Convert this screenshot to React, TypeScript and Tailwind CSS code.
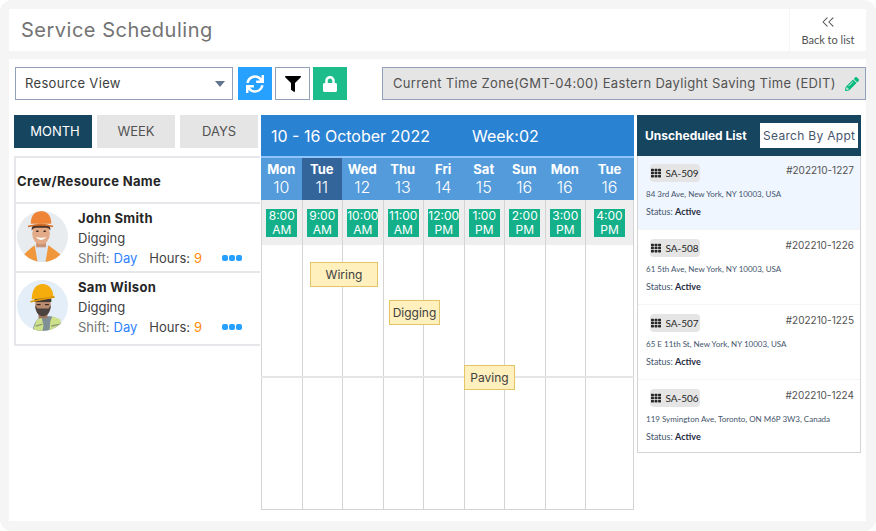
import { ChevronsLeft } from "lucide-react";
import { FaSync, FaFilter, FaLock, FaPencilAlt, FaTh } from "react-icons/fa";

const days = [
  { name: "Mon", date: 10, time: "8:00", part: "AM" },
  { name: "Tue", date: 11, time: "9:00", part: "AM", active: true },
  { name: "Wed", date: 12, time: "10:00", part: "AM" },
  { name: "Thu", date: 13, time: "11:00", part: "AM" },
  { name: "Fri", date: 14, time: "12:00", part: "PM" },
  { name: "Sat", date: 15, time: "1:00", part: "PM" },
  { name: "Sun", date: 16, time: "2:00", part: "PM" },
  { name: "Mon", date: 16, time: "3:00", part: "PM" },
  { name: "Tue", date: 16, time: "4:00", part: "PM" },
];

const tickets = [
  { id: "SA-509", ref: "#202210-1227", address: "84 3rd Ave, New York, NY 10003, USA", highlight: true },
  { id: "SA-508", ref: "#202210-1226", address: "61 5th Ave, New York, NY 10003, USA" },
  { id: "SA-507", ref: "#202210-1225", address: "65 E 11th St, New York, NY 10003, USA" },
  { id: "SA-506", ref: "#202210-1224", address: "119 Symington Ave, Toronto, ON M6P 3W3, Canada" },
];

const dayCols = "grid-cols-[repeat(8,minmax(0,1fr))_49px]";

function JohnAvatar() {
  return (
    <svg viewBox="0 0 52 52" className="mt-[3px] ml-px size-[51px] shrink-0">
      <defs>
        <clipPath id="john-clip">
          <circle cx="26" cy="26" r="26" />
        </clipPath>
      </defs>
      <circle cx="26" cy="26" r="26" fill="#e8ecef" />
      <g clipPath="url(#john-clip)">
        <path d="M14 52 L17 35 H33 L37 52 Z" fill="#dbe5f0" />
        <path d="M4 48 C9 42 14 38 18 35 L21 52 H4 Z" fill="#f0973c" />
        <path d="M47 47 C42 42 36 38 32 35 L29 52 H47 Z" fill="#f0973c" />
        <rect x="19.500" y="28" width="10" height="9" fill="#c99272" />
        <ellipse cx="24.500" cy="23" rx="9" ry="11" fill="#e2aa86" />
        <path d="M15 20 Q14.500 15 18 14 H31 Q34.500 15 34 20 Q32.500 17 30 17 H19 Q16.500 17 15 20 Z" fill="#4a3427" />
        <rect x="19.500" y="20" width="2.500" height="1.500" rx="0.700" fill="#3a2a22" />
        <rect x="27" y="20" width="2.500" height="1.500" rx="0.700" fill="#3a2a22" />
        <path d="M19 26.500 Q24.500 32.500 30 26.500 Q24.500 28 19 26.500 Z" fill="#ffffff" />
        <path d="M14 13 C14 4 19 0 24.500 0 C30 0 35 4 35 13 Z" fill="#ef8436" />
        <path d="M11 15 Q24 11.500 37 15 L36.500 16.500 Q24 13.500 11.500 16.500 Z" fill="#d66c24" />
      </g>
    </svg>
  );
}

function SamAvatar() {
  return (
    <svg viewBox="0 0 52 52" className="mt-[3px] ml-px size-[51px] shrink-0">
      <defs>
        <clipPath id="sam-clip">
          <circle cx="26" cy="26" r="26" />
        </clipPath>
      </defs>
      <circle cx="26" cy="26" r="26" fill="#e3eef8" />
      <g clipPath="url(#sam-clip)">
        <path d="M16 52 C17 43 21 39 26 37 H34 C40 38 46 41 48 52 Z" fill="#7f8f96" />
        <path d="M16 52 L20 41 L25 38 L27 46 L26 52 Z" fill="#cfe08a" />
        <path d="M33 52 L34 42 L36 37 L44 40 L46 52 Z" fill="#cfe08a" />
        <path d="M19 47 L26 45 M35 47 L45 45" stroke="#8c9a78" strokeWidth="1.500" />
        <rect x="22" y="30" width="9" height="9" fill="#9e7760" />
        <ellipse cx="26.500" cy="26" rx="8" ry="10.500" fill="#b98b70" />
        <path d="M18.500 26 C19 33 22 37 26.500 37 C31 37 34 33 34.500 26 L32 29 H21 Z" fill="#4a4340" />
        <rect x="18" y="19" width="17" height="3.500" fill="#3f3a38" />
        <rect x="20" y="24.500" width="4" height="1.200" fill="#3a2a22" />
        <rect x="28.500" y="24.500" width="4" height="1.200" fill="#3a2a22" />
        <path d="M15 20 C15 9 20 4 26 4 C33 4 37 10 37 17 Z" fill="#f5ad0d" />
        <path d="M13.500 21.500 L38 16 L38.500 18 L14 23 Z" fill="#dd9606" />
      </g>
    </svg>
  );
}

function CrewRow({ name, avatar, tall }: { name: string; avatar: React.ReactNode; tall?: boolean }) {
  return (
    <div className={`flex gap-2.5 border-t-2 border-gray-200 pt-1 ${tall ? "h-[73px]" : "h-[69px]"}`}>
      {avatar}
      <div className="text-[13px] leading-5 text-neutral-700">
        <div className="font-bold tracking-wide text-neutral-800">{name}</div>
        <div>Digging</div>
        <div className="flex items-center text-neutral-700">
          <span className="text-neutral-500">Shift:</span>
          <span className="ml-1 text-blue-500">Day</span>
          <span className="ml-3">Hours:</span>
          <span className="ml-1 text-orange-400">9</span>
          <span className="ml-5 flex gap-px">
            <span className="size-1.5 rounded-xs bg-[#27a1ff]" />
            <span className="size-1.5 rounded-xs bg-[#27a1ff]" />
            <span className="size-1.5 rounded-xs bg-[#27a1ff]" />
          </span>
        </div>
      </div>
    </div>
  );
}

export default function App() {
  return (
    <div
      className="flex h-screen w-screen flex-col gap-2 rounded-xl bg-neutral-100 p-[9px] pr-2.5 pb-2.5"
      style={{ fontFamily: "Inter, 'Noto Sans', sans-serif" }}
    >
      <header className="flex h-[42px] shrink-0 items-center justify-between bg-white pl-3">
        <h1 className="text-xl tracking-wide text-neutral-500">Service Scheduling</h1>
        <a
          className="flex h-full w-[77px] flex-col items-center justify-center border-l border-neutral-100 text-[11px] text-neutral-600"
          style={{ fontFamily: "Lato, sans-serif" }}
        >
          <ChevronsLeft className="size-5" strokeWidth={1.25} />
          <span>Back to list</span>
        </a>
      </header>

      <main className="flex min-h-0 flex-1 flex-col bg-white pt-2 pl-[5px]">
        <div className="flex items-center pl-px">
          <div className="relative w-[218px]">
            <select className="h-[33px] w-full appearance-none border border-slate-400 bg-white pl-[9px] text-[13px] tracking-wide text-neutral-700">
              <option>Resource View</option>
            </select>
            <svg viewBox="0 0 10 6" className="absolute top-3.5 right-2 h-1.5 w-2.5 fill-slate-500">
              <path d="M0 0h10L5 6z" />
            </svg>
          </div>
          <button className="ml-[5px] flex h-[33px] w-[34px] items-center justify-center bg-[#27a1ff] text-white">
            <FaSync className="size-[18px]" />
          </button>
          <button className="ml-[3px] flex h-[33px] w-[35px] items-center justify-center border border-slate-400 text-black">
            <FaFilter className="size-4" />
          </button>
          <button className="ml-[3px] flex h-[33px] w-[34px] items-center justify-center bg-[#1cbd8b] text-white">
            <FaLock className="size-4" />
          </button>
          <button className="ml-[35px] flex h-[33px] flex-1 items-center justify-between border border-slate-400 bg-neutral-200 pr-1.5 pl-2.5 text-[13px] tracking-wide text-neutral-600">
            <span>Current Time Zone(GMT-04:00) Eastern Daylight Saving Time (EDIT)</span>
            <FaPencilAlt className="size-3.5 text-emerald-500" />
          </button>
        </div>

        <div className="mt-[15px] flex flex-1 items-start">
          <section className="w-[246px] shrink-0">
            <div className="flex gap-[5px]">
              <button className="h-[33px] w-[78px] bg-[#16455f] pl-1 text-[13px] text-white">MONTH</button>
              <button className="h-[33px] w-[78px] bg-neutral-200 text-[13px] text-neutral-600">WEEK</button>
              <button className="h-[33px] w-[78px] bg-neutral-200 text-[13px] text-neutral-600">DAYS</button>
            </div>
            <div className="mt-2 border-y-2 border-l-2 border-gray-200">
              <div className="flex h-11 items-center pt-1 pl-px text-[13px] font-bold tracking-wide text-neutral-800">
                Crew/Resource Name
              </div>
              <CrewRow name="John Smith" avatar={<JohnAvatar />} />
              <CrewRow name="Sam Wilson" avatar={<SamAvatar />} tall />
            </div>
          </section>

          <section className="ml-px flex h-[395px] w-[373px] shrink-0 flex-col">
            <div className="flex h-[41px] shrink-0 items-center gap-10.5 bg-[#2a82d3] pl-2.5 text-base text-white">
              <span>10 - 16 October 2022</span>
              <span>Week:02</span>
            </div>
            <div className={`grid h-11 shrink-0 border-t-2 border-blue-300 bg-[#549bdb] text-center text-white ${dayCols}`}>
              {days.map((d, i) => (
                <div key={i} className={`flex flex-col justify-center ${d.active ? "bg-[#34659a]" : ""}`}>
                  <span className="text-[13px] leading-4 font-bold">{d.name}</span>
                  <span className="text-base leading-5 font-light">{d.date}</span>
                </div>
              ))}
            </div>
            <div className={`grid h-[45px] shrink-0 bg-[#eeeeee] ${dayCols}`}>
              {days.map((d, i) => (
                <div key={i} className="flex items-center justify-center border-l border-neutral-300 last:border-r">
                  <span className="flex h-7 w-[31px] flex-col items-center justify-center bg-[#14b08a] text-xs leading-3.5 text-white">
                    <span>{d.time}</span>
                    <span>{d.part}</span>
                  </span>
                </div>
              ))}
            </div>
            <div className="relative flex min-h-0 flex-1 flex-col border-b border-neutral-300">
              <div className={`grid flex-1 border-b-2 border-neutral-200 ${dayCols}`}>
                {days.map((_, i) => (
                  <div key={i} className="border-l border-neutral-300 last:border-r" />
                ))}
              </div>
              <div className={`grid flex-1 ${dayCols}`}>
                {days.map((_, i) => (
                  <div key={i} className="border-l border-neutral-300 last:border-r" />
                ))}
              </div>
              <span className="absolute top-[17px] left-[49px] flex h-[25px] w-[68px] items-center justify-center border border-[#e3c565] bg-[#fff0bd] text-xs text-neutral-700">
                Wiring
              </span>
              <span className="absolute top-[55px] left-32 flex h-[25px] w-[51px] items-center justify-center border border-[#e3c565] bg-[#fff0bd] text-xs text-neutral-700">
                Digging
              </span>
              <span className="absolute top-[120px] left-[203px] flex h-[25px] w-[51px] items-center justify-center border border-[#e3c565] bg-[#fff0bd] text-xs text-neutral-700">
                Paving
              </span>
            </div>
          </section>

          <section className="ml-[3px] w-56 shrink-0">
            <div className="flex h-[41px] items-center justify-between bg-[#16455f] pr-[3px] pl-2">
              <span className="text-xs font-bold text-white">Unscheduled List</span>
              <input
                placeholder="Search By Appt"
                className="h-[25px] w-[98px] bg-white pl-[3px] text-xs tracking-wide placeholder:text-slate-600"
              />
            </div>
            <div className="border-x border-b border-neutral-300" style={{ fontFamily: "Lato, sans-serif" }}>
              {tickets.map((t) => (
                <div
                  key={t.id}
                  className={`border-b border-neutral-100 pt-[9px] pr-1.5 pb-[11px] pl-2 first:pt-2 last:border-b-0 last:pb-[9px] ${t.highlight ? "bg-blue-50" : "bg-white"}`}
                >
                  <div className="flex items-start justify-between">
                    <span className="ml-1 flex h-[18px] w-[50px] items-center justify-center gap-1 rounded-sm bg-neutral-200 text-[10px] text-neutral-800">
                      <FaTh className="size-2.5" />
                      {t.id}
                    </span>
                    <span className="text-[10px] leading-3 text-neutral-600" style={{ fontFamily: "Inter, sans-serif" }}>
                      {t.ref}
                    </span>
                  </div>
                  <div className="mt-1.5 text-[8px] leading-3 text-slate-600">{t.address}</div>
                  <div className="mt-1.5 text-[9px] leading-3 text-slate-600">
                    Status: <span className="font-bold text-slate-800">Active</span>
                  </div>
                </div>
              ))}
            </div>
          </section>
        </div>
      </main>
    </div>
  );
}
